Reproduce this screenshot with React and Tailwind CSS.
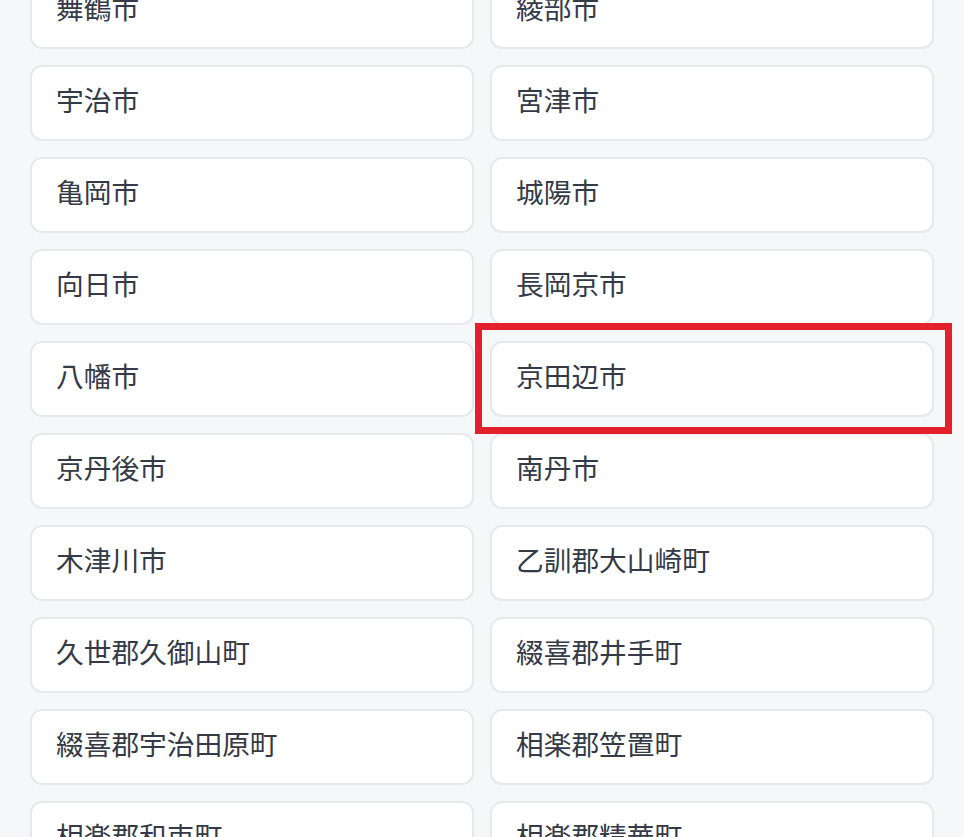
import React from "react";

const items = [
  "舞鶴市", "綾部市",
  "宇治市", "宮津市",
  "亀岡市", "城陽市",
  "向日市", "長岡京市",
  "八幡市", "京田辺市",
  "京丹後市", "南丹市",
  "木津川市", "乙訓郡大山崎町",
  "久世郡久御山町", "綴喜郡井手町",
  "綴喜郡宇治田原町", "相楽郡笠置町",
  "相楽郡和束町", "相楽郡精華町",
];

export default function App() {
  return (
    <div
      className="relative h-[837px] w-[964px] overflow-hidden bg-[#f6f7f9]"
      style={{ fontFamily: '"Noto Sans", "Noto Sans CJK JP", sans-serif' }}
    >
      <div className="-mt-[27px] grid grid-cols-2 gap-x-[16px] gap-y-[16px] px-[30px]">
        {items.map((t) => (
          <div
            key={t}
            className="flex h-[76px] items-center rounded-[12px] border-2 border-[#e6e8eb] bg-white pb-[4px] pl-[24px] text-[27.7px] leading-none text-[#343a46]"
          >
            {t}
          </div>
        ))}
      </div>
      <div className="pointer-events-none absolute left-[475px] top-[323px] h-[111px] w-[477px] border-[7px] border-[#e3202b]" />
    </div>
  );
}
